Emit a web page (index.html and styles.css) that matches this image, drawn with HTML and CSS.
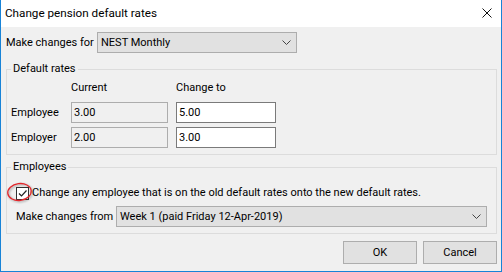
FILE: index.html
```html
<!DOCTYPE html>
<html>
<head>
<meta charset="utf-8">
<link rel="stylesheet" href="styles.css">
</head>
<body>
<div class="window">
  <div class="titlebar">
    <span class="title">Change pension default rates</span>
    <svg class="close" width="10" height="10" viewBox="0 0 10 10"><path d="M0.5 0.5 L9.5 9.5 M9.5 0.5 L0.5 9.5" stroke="#111" stroke-width="1" fill="none"/></svg>
  </div>
  <div class="content">
    <div class="row-for">
      <span class="lbl-for">Make changes for</span>
      <div class="select sel-for">
        <span>NEST Monthly</span>
        <svg class="chev" width="9" height="5" viewBox="0 0 9 5"><path d="M0.5 0.5 L4.5 4.5 L8.5 0.5" stroke="#444" stroke-width="1" fill="none"/></svg>
      </div>
    </div>

    <fieldset class="group g-rates">
      <legend>Default rates</legend>
      <div class="rates">
        <span></span>
        <span class="hdr">Current</span>
        <span class="hdr">Change to</span>
        <span class="rlbl">Employee</span>
        <div class="input ro">3.00</div>
        <div class="input">5.00</div>
        <span class="rlbl">Employer</span>
        <div class="input ro">2.00</div>
        <div class="input">3.00</div>
      </div>
    </fieldset>

    <fieldset class="group g-emp">
      <legend>Employees</legend>
      <div class="check-row">
        <span class="checkbox">
          <svg width="11" height="11" viewBox="0 0 11 11"><path d="M2 5.5 L4.5 8 L9.5 2.5" stroke="#222" stroke-width="1.2" fill="none"/></svg>
        </span>
        <span>Change any employee that is on the old default rates onto the new default rates.</span>
      </div>
      <div class="row-from">
        <span class="lbl-from">Make changes from</span>
        <div class="select sel-from">
          <span>Week 1 (paid Friday 12-Apr-2019)</span>
          <svg class="chev" width="9" height="5" viewBox="0 0 9 5"><path d="M0.5 0.5 L4.5 4.5 L8.5 0.5" stroke="#444" stroke-width="1" fill="none"/></svg>
        </div>
      </div>
    </fieldset>

    <div class="buttons">
      <div class="btn">OK</div>
      <div class="btn">Cancel</div>
    </div>
  </div>
  <svg class="annot" width="30" height="24" viewBox="0 0 30 24">
    <ellipse cx="14.5" cy="12" rx="11.8" ry="8.4" transform="rotate(-8 14.5 12)" fill="none" stroke="#e3262b" stroke-width="1.3"/>
  </svg>
</div>
</body>
</html>
```
FILE: styles.css
```css
html, body {
  margin: 0;
  padding: 0;
  background: #ffffff;
}
body {
  font-family: Roboto, "Noto Sans", sans-serif;
  font-size: 11px;
  color: #000;
}
.window {
  position: relative;
  width: 502px;
  height: 272px;
  box-sizing: border-box;
  border: 1px solid #1883d7;
  border-top: 0;
  display: flex;
  flex-direction: column;
  background: #f0f0f0;
}
.titlebar {
  height: 26px;
  background: #ffffff;
  display: flex;
  align-items: center;
  justify-content: space-between;
  padding: 0 9px 1px 4px;
  flex: none;
}
.title {
  font-size: 11.7px;
}
.close {
  display: block;
}
.content {
  flex: 1;
  display: flex;
  flex-direction: column;
  padding: 5px 4px 0 5px;
}
.row-for {
  display: flex;
  align-items: center;
  height: 21px;
}
.lbl-for {
  width: 91px;
}
.select {
  box-sizing: border-box;
  height: 21px;
  border: 1px solid #adadad;
  background: #e1e1e1;
  display: flex;
  align-items: center;
  justify-content: space-between;
  padding: 0 5px 0 3px;
}
.sel-for {
  width: 200px;
}
.sel-from {
  width: 371px;
}
.chev {
  display: block;
}
.group {
  margin: 0;
  min-width: 0;
  border: 1px solid #dcdcdc;
  line-height: 14px;
}
.group legend {
  padding: 0 2px;
  line-height: 14px;
}
.g-rates {
  margin-top: 9px;
  padding: 2px 4px 6px 4px;
}
.rates {
  display: grid;
  grid-template-columns: 52px 97px 100px;
  grid-template-rows: 20px 21px 21px;
  column-gap: 8px;
  row-gap: 4px;
  align-items: center;
}
.hdr {
  align-self: center;
}
.input {
  box-sizing: border-box;
  height: 21px;
  border: 1px solid #7a7a7a;
  background: #ffffff;
  padding: 0 2px;
  display: flex;
  align-items: center;
}
.input.ro {
  border-color: #adadad;
  background: #f0f0f0;
}
.g-emp {
  margin-top: 5px;
  padding: 11px 4px 6px 9px;
}
.g-emp legend {
  margin-left: -5px;
}
.check-row {
  display: flex;
  align-items: center;
  height: 16px;
}
.checkbox {
  box-sizing: border-box;
  width: 13px;
  height: 13px;
  border: 1px solid #333333;
  background: #ffffff;
  margin-right: 3px;
  display: flex;
  align-items: center;
  justify-content: center;
}
.checkbox svg {
  display: block;
}
.row-from {
  display: flex;
  align-items: center;
  margin-top: 5px;
}
.lbl-from {
  width: 100px;
}
.buttons {
  display: flex;
  justify-content: flex-end;
  gap: 6px;
  margin-top: 7px;
}
.btn {
  box-sizing: border-box;
  width: 74px;
  height: 23px;
  border: 1px solid #adadad;
  background: #e1e1e1;
  display: flex;
  align-items: center;
  justify-content: center;
}
.annot {
  position: absolute;
  left: 4px;
  top: 180px;
  overflow: visible;
  filter: drop-shadow(1px 1.5px 1px rgba(0,0,0,0.35));
}
```
